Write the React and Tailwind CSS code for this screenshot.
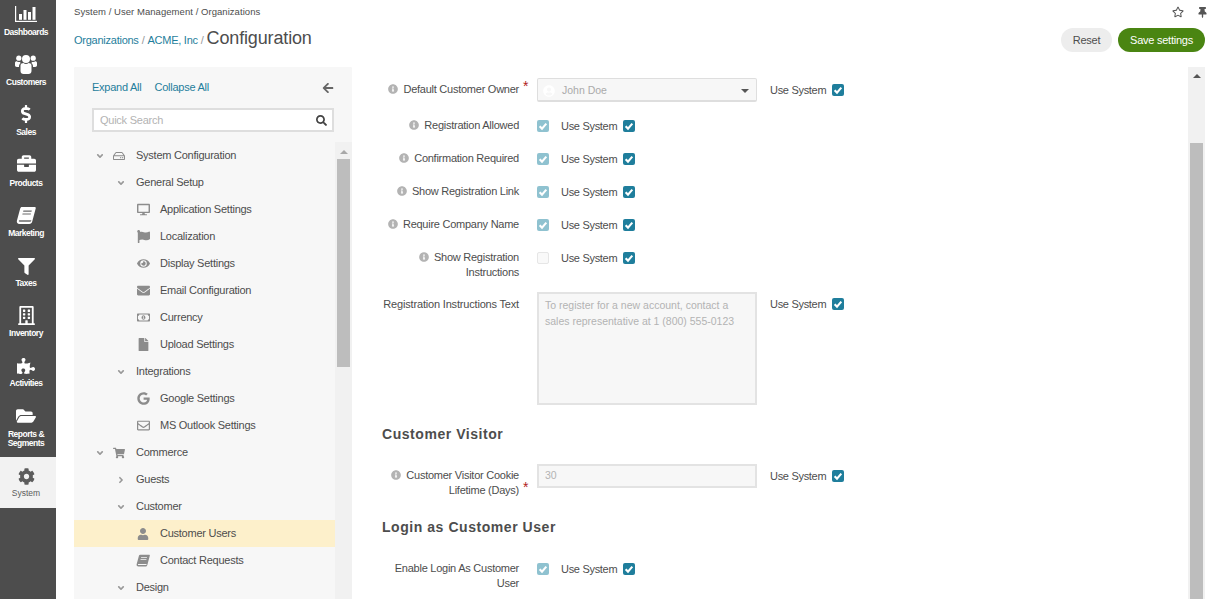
import React from 'react';
import {
  FaDollarSign, FaBriefcase, FaFilter, FaRegBuilding, FaPuzzlePiece, FaFolderOpen, FaCog,
  FaDesktop, FaFlag, FaEye, FaEnvelope, FaRegMoneyBillAlt, FaFile, FaGoogle, FaRegEnvelope,
  FaShoppingCart, FaUser, FaInfoCircle, FaRegStar, FaThumbtack, FaArrowLeft, FaSearch, FaRegHdd,
  FaAngleDown, FaAngleRight, FaUserCircle,
} from 'react-icons/fa';

const ChartIcon = ({ className }) => (
  <svg viewBox="0 0 22 16" className={className} fill="currentColor">
    <rect x="0" y="0" width="1.2" height="16" />
    <rect x="0" y="14.8" width="22" height="1.2" />
    <rect x="4" y="8" width="3" height="5.8" />
    <rect x="8.5" y="4" width="3" height="9.8" />
    <rect x="13" y="6" width="3" height="7.8" />
    <rect x="17.5" y="1" width="3" height="12.8" />
  </svg>
);

const UsersIcon = ({ className }) => (
  <svg viewBox="0 0 22 20" className={className} fill="currentColor">
    <circle cx="11" cy="5" r="4" />
    <circle cx="3.8" cy="4.2" r="2.6" />
    <circle cx="18.2" cy="4.2" r="2.6" />
    <path d="M5.5 11.5c0-1.6 1.6-2.4 3-2.4.6.6 1.5 1 2.5 1s1.9-.4 2.5-1c1.4 0 3 .8 3 2.4v5.4c0 1.7-1.3 3.1-3 3.1H8.5c-1.7 0-3-1.4-3-3.1z" />
    <path d="M0 8.8c0-1 .9-1.6 1.6-1.6.6.5 1.3.8 2.2.8.5 0 1-.1 1.4-.3-.1.7.2 1.2.4 1.6C4.600 10 4 11 4 12.500v.5H1.800C.8 13 0 12.300 0 11.300z" />
    <path d="M22 8.800c0-1-.9-1.600-1.600-1.600-.6.5-1.300.8-2.200.8-.5 0-1-.1-1.400-.3.1.7-.2 1.200-.4 1.600C17.400 10 18 11 18 12.500v.5h2.200c1 0 1.800-.7 1.800-1.700z" />
  </svg>
);

const BookIcon = ({ className, inner = '#8a8a8a' }) => (
  <svg viewBox="0 0 20 20" className={className} fill="currentColor">
    <path d="M6 1h12.6c.9 0 1.400.7 1.100 1.600l-3.400 12.600c-.5 1.700-1.300 2.800-3.200 2.800H3.400C1.600 18 .4 16.600.9 14.800L4.200 2.600C4.500 1.600 5 1 6 1z" />
    <path d="M7.400 4.600h8.400l-.3 1.100H7.100zM6.600 7.400H15l-.3 1.100H6.300z" fill={inner} />
    <path d="M3.200 14.200h12.200c-.4 1.100-.8 1.500-1.500 1.500H3.600c-.9 0-1-1-.4-1.500z" fill={inner} />
  </svg>
);

const nav = [
  { label: 'Dashboards', icon: <ChartIcon className="w-[22px] h-[16px] mb-[2px]" /> },
  { label: 'Customers', icon: <UsersIcon className="w-[22px] h-[20px]" /> },
  { label: 'Sales', icon: <FaDollarSign className="text-[18px] mb-[1px]" /> },
  { label: 'Products', icon: <FaBriefcase className="text-[19px] mb-[2px]" /> },
  { label: 'Marketing', icon: <BookIcon className="w-[20px] h-[20px] -mb-[1px]" inner="#6a6a6a" /> },
  { label: 'Taxes', icon: <FaFilter className="text-[17px]" /> },
  { label: 'Inventory', icon: <FaRegBuilding className="text-[19px]" /> },
  { label: 'Activities', icon: <FaPuzzlePiece className="text-[18px]" /> },
  { label: 'Reports & Segments', icon: <FaFolderOpen className="text-[20px]" />, tall: true },
];

const tree = [
  { level: 0, open: true, label: 'System Configuration', icon: <FaRegHdd /> },
  { level: 1, open: true, label: 'General Setup' },
  { level: 2, label: 'Application Settings', icon: <FaDesktop /> },
  { level: 2, label: 'Localization', icon: <FaFlag /> },
  { level: 2, label: 'Display Settings', icon: <FaEye /> },
  { level: 2, label: 'Email Configuration', icon: <FaEnvelope /> },
  { level: 2, label: 'Currency', icon: <FaRegMoneyBillAlt /> },
  { level: 2, label: 'Upload Settings', icon: <FaFile /> },
  { level: 1, open: true, label: 'Integrations' },
  { level: 2, label: 'Google Settings', icon: <FaGoogle /> },
  { level: 2, label: 'MS Outlook Settings', icon: <FaRegEnvelope /> },
  { level: 0, open: true, label: 'Commerce', icon: <FaShoppingCart /> },
  { level: 1, open: false, label: 'Guests' },
  { level: 1, open: true, label: 'Customer' },
  { level: 2, label: 'Customer Users', icon: <FaUser className="text-[12px]" />, active: true },
  { level: 2, label: 'Contact Requests', icon: <BookIcon className="w-[14px] h-[14px]" inner="#f7f7f7" /> },
  { level: 1, open: true, label: 'Design' },
];

const Check = ({ state = 'on' }) => {
  if (state === 'off') {
    return <span className="block w-[12px] h-[12px] rounded-[2px] border border-[#e6e6e6] bg-[#f9f9f9] shrink-0" />;
  }
  return (
    <span className={`w-[12px] h-[12px] rounded-[2px] flex items-center justify-center shrink-0 ${state === 'on' ? 'bg-[#1f7e9c]' : 'bg-[#8fc2d0]'}`}>
      <svg viewBox="0 0 12 12" className="w-[12px] h-[12px]" fill="none" stroke="white" strokeWidth="2.1">
        <path d="M2.600 6.200l2.400 2.400 4.300-5" />
      </svg>
    </span>
  );
};

const UseSystem = ({ className = '' }) => (
  <div className={`flex items-center gap-[6px] text-[11px] tracking-[-0.3px] leading-[12px] whitespace-nowrap text-[#4d4d4d] ${className}`}>
    Use System
    <Check />
  </div>
);

const Label = ({ children, info, required, pt = '' }) => (
  <div className={`w-[137px] shrink-0 text-right text-[11px] leading-[15px] text-[#4d4d4d] whitespace-nowrap ${pt}`}>
    {info && <FaInfoCircle className="inline text-[10px] text-[#b3b3b3] mr-[5px] align-[-1px]" />}
    {children}
    {required && (
      <span className="relative inline-block w-0 h-0">
        <span className="absolute left-[4px] -top-[12px] text-[#b01c1c] text-[14px] leading-[10px]">*</span>
      </span>
    )}
  </div>
);

const CheckRow = ({ label, info, state = 'dim', h = 'h-[33px]' }) => (
  <div className={`flex ${h}`}>
    <Label info={info} pt="-mt-[1px]">{label}</Label>
    <div className="ml-[18px] flex items-start gap-[12px]">
      <div className="pt-[1px]"><Check state={state} /></div>
      <UseSystem className="pt-[1px]" />
    </div>
  </div>
);

export default function App() {
  return (
    <div className="flex w-[1225px] h-[599px] overflow-hidden bg-white font-['Liberation_Sans',Arial,sans-serif] text-[#4d4d4d] tracking-[-0.25px]">
      <aside className="w-[56px] shrink-0 bg-[#4d4d4d] overflow-hidden tracking-[-0.5px]">
        <div className="-mt-[4px]">
          {nav.map((item) => (
            <div key={item.label} className={`${item.tall ? 'h-[59px]' : 'h-[50.2px]'} pr-[4px] flex flex-col items-center text-white`}>
              <div className="h-[28px] shrink-0 flex items-end justify-center">{item.icon}</div>
              <div className="mt-[4px] text-center text-[8.5px] leading-[9.5px] font-bold">{item.label}</div>
            </div>
          ))}
          <div className="h-[51px] pr-[4px] flex flex-col items-center bg-[#f2f2f2] text-[#5c5c5c]">
            <div className="h-[28px] flex items-end justify-center"><FaCog className="text-[17px]" /></div>
            <div className="mt-[3px] text-[8.5px] leading-[10px] tracking-normal">System</div>
          </div>
        </div>
      </aside>

      <main className="flex-1 min-w-0 pl-[18px] pr-[20px]">
        <div className="h-[67px]">
          <div className="flex justify-between pt-[6px]">
            <div className="text-[9.5px] leading-[12px] tracking-[0.05px]">System / User Management / Organizations</div>
            <div className="flex items-center gap-[13px] -mr-[3px]">
              <FaRegStar className="text-[12px] text-[#555]" />
              <FaThumbtack className="text-[11px] text-[#555]" />
            </div>
          </div>
          <div className="flex justify-between items-start mt-[3px]">
            <div className="flex items-baseline mt-[4px] text-[11px] text-[#1f7e9c] whitespace-nowrap">
              <span>Organizations</span>
              <span className="text-[#999] mx-[3px]">/</span>
              <span>ACME, Inc</span>
              <span className="text-[#999] mx-[3px]">/</span>
              <span className="text-[18px] tracking-[-0.15px] text-[#4d4d4d]">Configuration</span>
            </div>
            <div className="flex gap-[6px] mt-[7px]">
              <button className="h-[24px] w-[51px] rounded-full bg-[#ededed] text-[11px] text-[#4d4d4d]">Reset</button>
              <button className="h-[24px] w-[87px] rounded-full bg-[#4a8512] text-[11px] text-white">Save settings</button>
            </div>
          </div>
        </div>

        <div className="flex h-[532px]">
          <section className="w-[278px] shrink-0 bg-[#f1f1f1] rounded-t-[2px] flex flex-col overflow-hidden">
            <div className="h-[75px] shrink-0 bg-[#f7f7f7] px-[18px]">
              <div className="flex items-center h-[41px] text-[11px] text-[#1f7e9c]">
                <span>Expand All</span>
                <span className="ml-[13px]">Collapse All</span>
                <FaArrowLeft className="ml-auto text-[12px] text-[#666]" />
              </div>
              <div className="h-[24px] border-2 border-[#dedede] bg-white flex items-center pl-[6px] pr-[5px] text-[11px] text-[#b3b3b3]">
                Quick Search
                <FaSearch className="ml-auto text-[11px] text-[#444]" />
              </div>
            </div>
            <div className="flex flex-1 min-h-0">
              <div className="w-[261px] shrink-0 bg-[#f7f7f7] overflow-hidden">
                {tree.map((row) => (
                  <div key={row.label} className={`h-[27px] flex items-center text-[11px] whitespace-nowrap ${row.active ? 'bg-[#fdf0cb]' : ''}`}>
                    {row.level === 2 ? (
                      <div className="w-[86px] shrink-0 flex justify-end pr-[10px] text-[13px] text-[#8c8c8c]"><span className="w-[14px] flex justify-center">{row.icon}</span></div>
                    ) : row.level === 1 ? (
                      <div className="w-[62px] shrink-0 flex justify-start pl-[42px] text-[10px] text-[#999]">
                        {row.open ? <FaAngleDown /> : <FaAngleRight />}
                      </div>
                    ) : (
                      <div className="w-[62px] shrink-0 flex items-center pl-[21px] text-[#999]">
                        <FaAngleDown className="text-[10px]" />
                        <span className="ml-[8px] text-[12px] text-[#8c8c8c]">{row.icon}</span>
                      </div>
                    )}
                    <span>{row.label}</span>
                  </div>
                ))}
              </div>
              <div className="w-[17px] shrink-0 flex flex-col items-center">
                <div className="h-[17px] flex items-center justify-center">
                  <span className="border-x-[4px] border-x-transparent border-b-[4px] border-b-[#a8a8a8] mt-[2px]" />
                </div>
                <div className="w-[13px] h-[208px] bg-[#bdbdbd]" />
              </div>
            </div>
          </section>

          <section className="flex-1 min-w-0 pl-[30px] overflow-hidden">
            <div className="flex pt-[11px] h-[52px]">
              <Label info required pt="pt-[4px]">Default Customer Owner</Label>
              <div className="ml-[18px] w-[220px] h-[24px] border border-[#dedede] border-b-2 rounded-[2px] bg-[#f7f7f7] flex items-center pl-[5px] pr-[7px] pt-[2px] text-[10.5px] tracking-normal text-[#aaa]">
                <FaUserCircle className="text-[12px] text-white mr-[7px]" />
                John Doe
                <span className="ml-auto border-x-[4px] border-x-transparent border-t-[4px] border-t-[#555]" />
              </div>
              <UseSystem className="ml-[13px] h-[24px]" />
            </div>
            <CheckRow info label="Registration Allowed" />
            <CheckRow info label="Confirmation Required" />
            <CheckRow info label="Show Registration Link" />
            <CheckRow info label="Require Company Name" />
            <CheckRow info state="off" label={<>Show Registration<br />Instructions</>} h="h-[41px]" />
            <div className="flex h-[113px]">
              <Label pt="pt-[5px] tracking-[-0.18px]">Registration Instructions Text</Label>
              <div className="ml-[18px] w-[220px] h-[113px] border-2 border-[#e3e3e3] bg-[#f7f7f7] px-[6px] pt-[3px] text-[10.5px] leading-[16px] tracking-normal text-[#b3b3b3]">
                To register for a new account, contact a sales representative at 1 (800) 555-0123
              </div>
              <UseSystem className="ml-[13px] h-[24px] self-start" />
            </div>
            <h3 className="mt-[19px] h-[20px] text-[14px] leading-[20px] font-bold tracking-[0.55px]">Customer Visitor</h3>
            <div className="flex mt-[20px] h-[39px] items-start">
              <Label info required pt="pt-[4px]"><>Customer Visitor Cookie<br />Lifetime (Days)</></Label>
              <div className="ml-[18px] w-[220px] h-[24px] border-2 border-[#e3e3e3] bg-[#f7f7f7] flex items-center px-[6px] text-[10.5px] tracking-normal text-[#b3b3b3]">30</div>
              <UseSystem className="ml-[13px] h-[24px]" />
            </div>
            <h3 className="mt-[14px] h-[20px] text-[14px] leading-[20px] font-bold tracking-[0.55px]">Login as Customer User</h3>
            <div className="mt-[25px]">
              <CheckRow label={<>Enable Login As Customer<br />User</>} />
            </div>
          </section>

          <div className="w-[17px] shrink-0 bg-[#f1f1f1] flex flex-col items-center">
            <div className="h-[17px] flex items-center justify-center">
              <span className="border-x-[4px] border-x-transparent border-b-[4px] border-b-[#555] mt-[1px]" />
            </div>
            <div className="mt-[59px] w-[13px] flex-1 bg-[#bdbdbd]" />
          </div>
        </div>
      </main>
    </div>
  );
}
